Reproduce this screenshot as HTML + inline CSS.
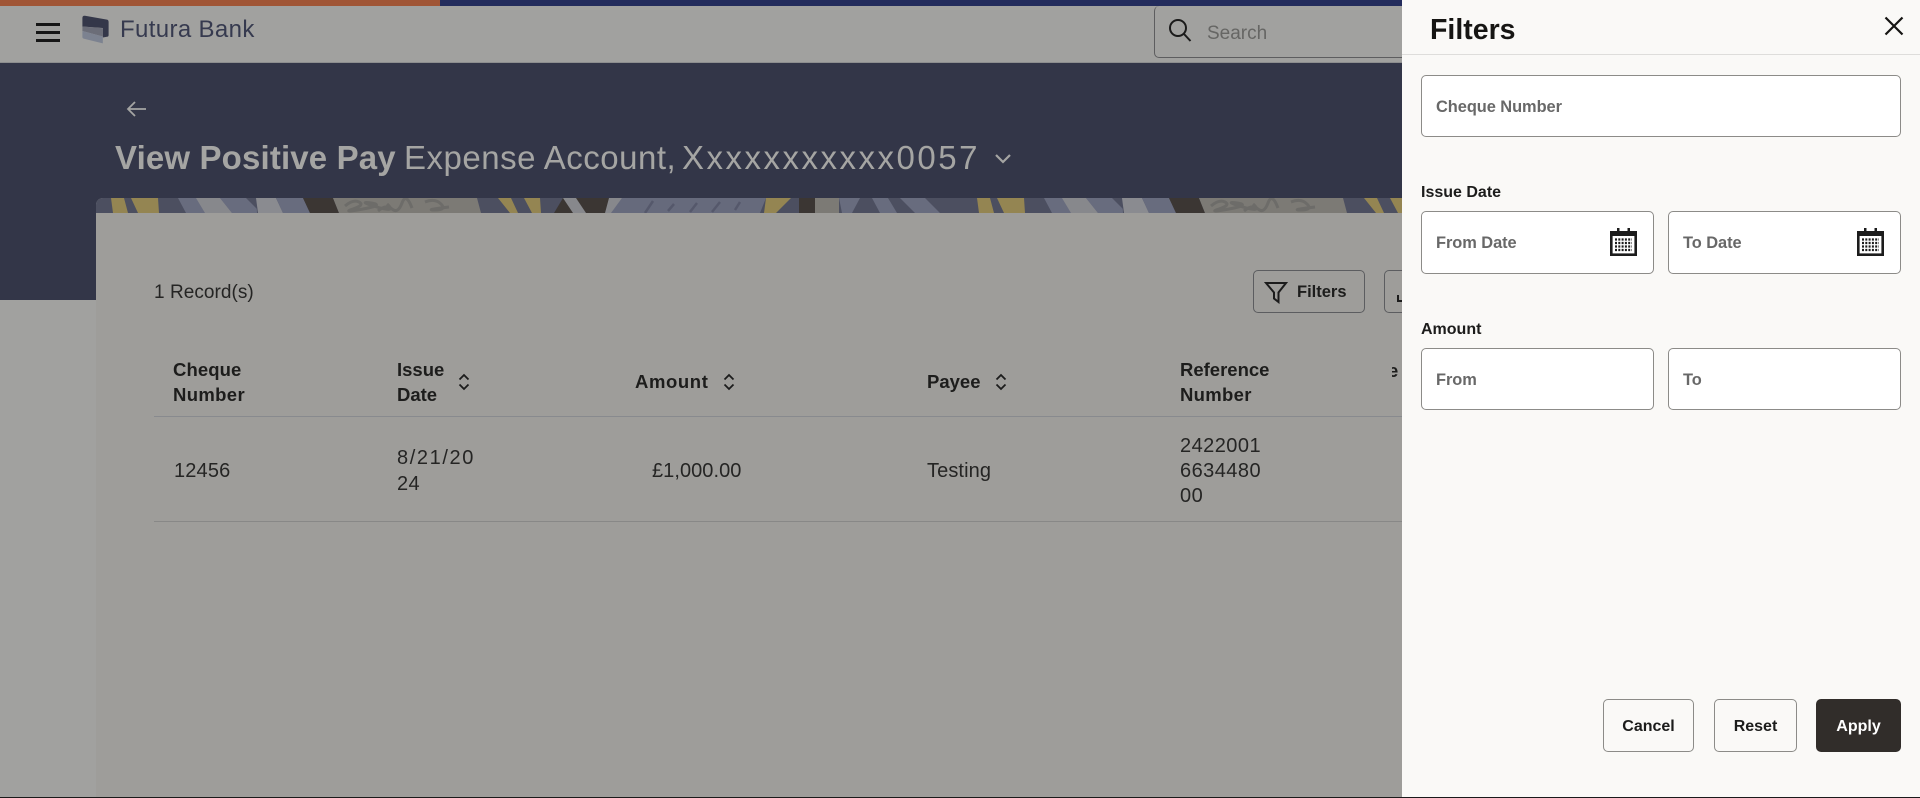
<!DOCTYPE html>
<html lang="en"><head><meta charset="utf-8"><title>View Positive Pay</title>
<style>
html,body{margin:0;padding:0;width:1920px;height:798px;overflow:hidden;background:#a1a19f}
body{position:relative;font-family:"Liberation Sans",sans-serif;color:#1c1c1b}
.a{position:absolute;white-space:nowrap;line-height:1}
.box{position:absolute;box-sizing:border-box;background:#fff;border:1px solid #8c8b88;border-radius:5px}
.th{font-size:18.5px;font-weight:bold;color:#1d1d1c;letter-spacing:0}
.td{font-size:20px;color:#252524;letter-spacing:.05px}
.ph{font-size:16.4px;color:#686868;font-weight:bold;letter-spacing:-.05px}
.lb{font-size:16px;font-weight:bold;color:#1c1c1b}
.btn{position:absolute;box-sizing:border-box;border:1px solid #8c8b88;border-radius:5px;font-size:16px;font-weight:bold;text-align:center;height:53px;line-height:53px;top:699px}
svg{position:absolute;display:block}
</style></head><body>
<div class="a" style="left:0;top:0;width:1920px;height:6px;background:#232c5c"></div>
<div class="a" style="left:0;top:0;width:440px;height:6px;background:#a05535"></div>
<div class="a" style="left:0;top:6px;width:1402px;height:57px;background:#a1a19f;border-bottom:1px solid #8d8e8f;box-sizing:border-box"></div>

<div class="a" style="left:36px;top:23px;width:24px;height:2.5px;background:#161616"></div>
<div class="a" style="left:36px;top:31px;width:24px;height:2.5px;background:#161616"></div>
<div class="a" style="left:36px;top:39px;width:24px;height:2.5px;background:#161616"></div>

<svg style="left:82px;top:15px" width="28" height="29" viewBox="0 0 28 29">
<path d="M.4 3Q.4 .4 3 .8L25 4.600Q26.600 5 26.600 7V20Q26.600 21.800 25 21.800L20.800 22.500V13L.4 11.500Z" fill="#343749"/>
<path d="M.4 11.500L20.800 13.200V21.500L.4 16Z" fill="#6b6d78"/>
<path d="M.4 16L20.800 21.500V28.400L2 23.800Q.4 23.300 .4 22Z" fill="#7c8290"/>
</svg>
<div class="a" style="left:120px;top:18px;font-size:24px;color:#363a4f;letter-spacing:.36px">Futura Bank</div>

<div class="box" style="left:1154px;top:6px;width:260px;height:52px;background:#a1a19f;border-color:#5d5d5f;border-top:0"></div>
<svg style="left:1168px;top:18px" width="24" height="24" viewBox="0 0 24 24" fill="none" stroke="#1b1b1b" stroke-width="2"><circle cx="10" cy="10" r="8"/><path d="M16 16l6.500 7"/></svg>
<div class="a" style="left:1207px;top:24px;font-size:19px;color:#666664">Search</div>

<div class="a" style="left:0;top:63px;width:1402px;height:237px;background:#333648"></div>
<svg style="left:126px;top:100px" width="21" height="18" viewBox="0 0 21 18" fill="none" stroke="#a5a5a3" stroke-width="1.800"><path d="M20 9H2M9 2L2 9l7 7"/></svg>
<div class="a" style="left:115px;top:141px;font-size:33px;font-weight:bold;color:#a5a5a3;letter-spacing:.15px">View Positive Pay</div>
<div class="a" style="left:404px;top:141px;font-size:33px;color:#a5a5a3;letter-spacing:.5px">Expense Account,</div>
<div class="a" style="left:682px;top:141px;font-size:33px;color:#a5a5a3;letter-spacing:2.500px">Xxxxxxxxxxx0057</div>
<svg style="left:993px;top:152px" width="20" height="13" viewBox="0 0 20 13" fill="none" stroke="#a5a5a3" stroke-width="2.200"><path d="M3 3l7 7 7-7"/></svg>

<div class="a" style="left:96px;top:198px;width:1306px;height:600px;background:#9e9d9a;border-radius:7px 0 0 0;overflow:hidden">
<svg style="left:0;top:0" width="1306" height="15" viewBox="96 0 1306 15">
<defs><g id="b">
<rect x="96" y="0" width="866" height="15" fill="#4c4f60"/>
<path d="M111 0H124L128 15H113Z M131 0H158L159 15H138Z" fill="#948552"/>
<path d="M178 0H230L245 15H186Z" fill="#686c7e"/>
<path d="M196 0H220L232 15H205Z" fill="#87888c"/>
<path d="M220 0H256L257 15H232Z" fill="#686c7e"/>
<path d="M246 0H258L257 11Z" fill="#4c4f60"/>
<path d="M256 0H276L283 15H258Z" fill="#8a8b90"/>
<path d="M276 0H303L310 15H283Z" fill="#686c7e"/>
<path d="M303 0H333L339 15H310Z" fill="#3b3633"/>
<path d="M333 0H477L481 15H339Z" fill="#7c7a75"/>
<path d="M345 8q8-7 14-4t-6 7 10 0 8-6 6 4 10-3M378 13q8-7 14-2t10-6 10 5M425 4q10-4 16 2t-6 6 14-3" fill="none" stroke="#6d6c69" stroke-width="3"/>
<path d="M498 0H511L518 15H510Z M524 0H540L541 15H532Z" fill="#948552"/>
<path d="M563 0H622L611 15H554Z" fill="#3b3633"/>
<path d="M563 0H576L586 15H573Z M609 0H622L616 15H605Z" fill="#87888c"/>
<path d="M622 0H766L760 15H611Z" fill="#666a7c"/>
<path d="M645 15l8-12M668 13l6-7M690 14l7-9M712 14l8-10M735 12l5-8" stroke="#55586b" stroke-width="2.500" fill="none"/>
<path d="M766 0H791L776 15H764Z" fill="#948552"/>
<path d="M799 0H815V15H799Z" fill="#3b3633"/>
<path d="M815 0H839V15H815Z" fill="#7c7a75"/>
<path d="M839 0H860L852 15H842Z M872 0H888L897 15H880Z M900 0H925L940 15H915Z" fill="#686c7e"/>
</g></defs>
<use href="#b"/><use href="#b" x="866"/>
</svg>
<div class="a" style="left:0;top:15px;width:1306px;height:600px;background:#9e9d9a"></div>
</div>

<div class="a td" style="left:154px;top:283px;font-size:19px">1 Record(s)</div>

<div class="box" style="left:1253px;top:270px;width:112px;height:43px;background:#9e9d9a;border-color:#5c5d60"></div>
<svg style="left:1264px;top:281px" width="24" height="23" viewBox="0 0 24 23" fill="none" stroke="#1c1c1c" stroke-width="2"><path d="M2 2H22L14.500 11.500V21L10 17.500V11.500Z"/></svg>
<div class="a" style="left:1297px;top:284px;font-size:16.500px;font-weight:bold;color:#1d1d1c">Filters</div>
<div class="box" style="left:1384px;top:270px;width:40px;height:43px;background:#9e9d9a;border-color:#5c5d60"></div>
<div class="a" style="left:1397px;top:295px;width:5px;height:7px;border-left:2px solid #1c1c1c;border-bottom:2px solid #1c1c1c;box-sizing:border-box"></div>

<div class="a th" style="left:173px;top:361px;letter-spacing:.1px">Cheque</div>
<div class="a th" style="left:173px;top:386px;letter-spacing:.35px">Number</div>
<div class="a th" style="left:397px;top:361px">Issue</div>
<div class="a th" style="left:397px;top:386px">Date</div>
<svg style="left:458px;top:373px" width="12" height="18" viewBox="0 0 12 18" fill="none" stroke="#1c1c1c" stroke-width="1.800"><path d="M1.500 6.500L6 2l4.500 4.500M1.500 11.500L6 16l4.500-4.500"/></svg>
<div class="a th" style="left:635px;top:373px;letter-spacing:.6px">Amount</div>
<svg style="left:723px;top:373px" width="12" height="18" viewBox="0 0 12 18" fill="none" stroke="#1c1c1c" stroke-width="1.800"><path d="M1.500 6.500L6 2l4.500 4.500M1.500 11.500L6 16l4.500-4.500"/></svg>
<div class="a th" style="left:927px;top:373px">Payee</div>
<svg style="left:995px;top:373px" width="12" height="18" viewBox="0 0 12 18" fill="none" stroke="#1c1c1c" stroke-width="1.800"><path d="M1.500 6.500L6 2l4.500 4.500M1.500 11.500L6 16l4.500-4.500"/></svg>
<div class="a th" style="left:1180px;top:361px">Reference</div>
<div class="a th" style="left:1180px;top:386px;letter-spacing:.3px">Number</div>
<div class="a" style="left:1392px;top:361px;width:10px;height:24px;overflow:hidden"><span class="a th" style="left:-4px;top:1px">e</span></div>

<div class="a" style="left:154px;top:416px;width:1248px;height:1px;background:#888a8e"></div>
<div class="a td" style="left:174px;top:461px;letter-spacing:.15px">12456</div>
<div class="a td" style="left:397px;top:448px;letter-spacing:1.600px">8/21/20</div>
<div class="a td" style="left:397px;top:474px;letter-spacing:.4px">24</div>
<div class="a td" style="left:652px;top:461px;letter-spacing:.05px">£1,000.00</div>
<div class="a td" style="left:927px;top:461px;letter-spacing:.1px">Testing</div>
<div class="a td" style="left:1180px;top:436px;letter-spacing:.45px">2422001</div>
<div class="a td" style="left:1180px;top:461px;letter-spacing:.45px">6634480</div>
<div class="a td" style="left:1180px;top:486px;letter-spacing:.45px">00</div>
<div class="a" style="left:154px;top:521px;width:1248px;height:1px;background:#888887"></div>

<div class="a" style="left:1402px;top:0;width:518px;height:798px;background:#faf9f7"></div>
<div class="a" style="left:1402px;top:54px;width:518px;height:1px;background:#dedddb"></div>
<div class="a" style="left:1430px;top:16px;font-size:28.500px;font-weight:bold;color:#161513">Filters</div>
<svg style="left:1884px;top:16px" width="20" height="20" viewBox="0 0 20 20" fill="none" stroke="#161513" stroke-width="2.200"><path d="M1.500 1.500L18.500 18.500M18.500 1.500L1.500 18.500"/></svg>

<div class="box" style="left:1421px;top:75px;width:480px;height:62px"></div>
<div class="a ph" style="left:1436px;top:99px">Cheque Number</div>

<div class="a lb" style="left:1421px;top:185px">Issue Date</div>
<div class="box" style="left:1421px;top:211px;width:233px;height:63px"></div>
<div class="a ph" style="left:1436px;top:235px">From Date</div>
<div class="box" style="left:1668px;top:211px;width:233px;height:63px"></div>
<div class="a ph" style="left:1683px;top:235px">To Date</div>

<svg style="left:1857px;top:228px" width="27" height="28" viewBox="0 0 27 28">
<defs><g id="cal">
<rect x="1.300" y="4.300" width="24.400" height="22.400" fill="#fff" stroke="#1c1c1c" stroke-width="2.600"/>
<rect x="1" y="4" width="25" height="4" fill="#1c1c1c"/>
<rect x="7" y="0" width="2.500" height="6" fill="#1c1c1c"/><rect x="17.500" y="0" width="2.500" height="6" fill="#1c1c1c"/>
<path d="M5 11.500H22M5 15H22M5 18.500H22M5 22H22" stroke="#1c1c1c" stroke-width="2.200" stroke-dasharray="2 1.300" fill="none"/>
</g></defs><use href="#cal"/></svg>
<svg style="left:1610px;top:228px" width="27" height="28" viewBox="0 0 27 28"><use href="#cal"/></svg>

<div class="a lb" style="left:1421px;top:322px">Amount</div>
<div class="box" style="left:1421px;top:348px;width:233px;height:62px"></div>
<div class="a ph" style="left:1436px;top:372px">From</div>
<div class="box" style="left:1668px;top:348px;width:233px;height:62px"></div>
<div class="a ph" style="left:1683px;top:372px">To</div>

<div class="btn" style="left:1603px;width:91px">Cancel</div>
<div class="btn" style="left:1714px;width:83px">Reset</div>
<div class="btn" style="left:1816px;width:85px;background:#312d2a;border-color:#312d2a;color:#fff">Apply</div>

<div class="a" style="left:0;top:797px;width:1920px;height:1px;background:#1a1a1a"></div>
</body></html>
